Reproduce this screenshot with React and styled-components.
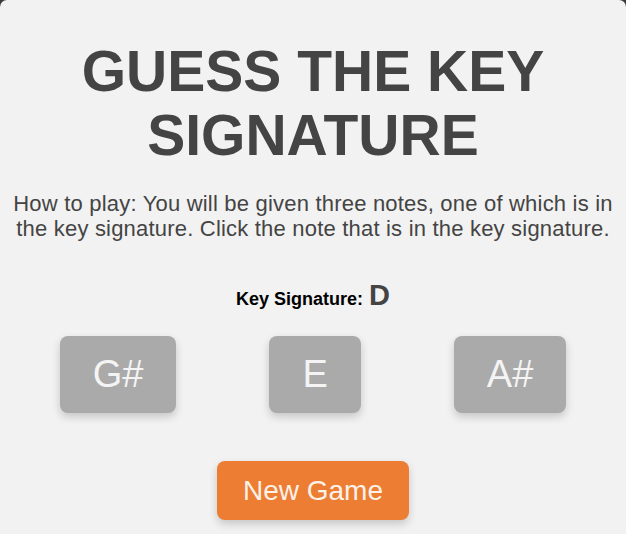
import React from "react";
import styled, { createGlobalStyle } from "styled-components";

const GlobalStyle = createGlobalStyle`
  html, body {
    margin: 0;
    padding: 0;
    background: #3a3a3a;
  }
  #root {
    width: 626px;
    height: 534px;
  }
`;

const Card = styled.div`
  width: 626px;
  height: 534px;
  box-sizing: border-box;
  background: #f2f2f2;
  border-radius: 7px 7px 0 0;
  font-family: "Liberation Sans", Arial, Helvetica, sans-serif;
  display: flex;
  flex-direction: column;
  align-items: center;
  padding: 39px 8px 0;
`;

const Title = styled.h1`
  margin: 0;
  font-size: 57px;
  line-height: 64px;
  font-weight: bold;
  color: #444444;
  text-align: center;
  width: 500px;
`;

const HowTo = styled.p`
  margin: 24px 0 0;
  font-size: 22px;
  line-height: 25px;
  letter-spacing: 0.2px;
  color: #444444;
  text-align: center;
`;

const KeyRow = styled.div`
  margin-top: 40px;
  display: flex;
  align-items: baseline;
  gap: 6px;
  line-height: 1;
`;

const KeyLabel = styled.span`
  font-size: 18px;
  font-weight: bold;
  color: #000;
`;

const KeyValue = styled.span`
  font-size: 29px;
  font-weight: bold;
  color: #444444;
`;

const Notes = styled.div`
  margin-top: 26px;
  display: flex;
  gap: 93px;
`;

const NoteButton = styled.button`
  height: 77px;
  padding: 0 33px;
  border: none;
  border-radius: 8px;
  background: #aaaaaa;
  color: #f4f4f4;
  font-family: inherit;
  font-size: 38px;
  box-shadow: 0 4px 8px rgba(0, 0, 0, 0.18);
  cursor: pointer;
`;

const NewGame = styled.button`
  margin-top: 48px;
  height: 59px;
  padding: 0 26px;
  border: none;
  border-radius: 8px;
  background: #ec7d33;
  color: #fdf1e8;
  font-family: inherit;
  font-size: 28px;
  box-shadow: 0 4px 8px rgba(0, 0, 0, 0.18);
  cursor: pointer;
`;

const notes = ["G#", "E", "A#"];

export default function App() {
  return (
    <>
      <GlobalStyle />
      <Card>
        <Title>GUESS THE KEY SIGNATURE</Title>
        <HowTo>
          How to play: You will be given three notes, one of which is in the key
          signature. Click the note that is in the key signature.
        </HowTo>
        <KeyRow>
          <KeyLabel>Key Signature:</KeyLabel>
          <KeyValue>D</KeyValue>
        </KeyRow>
        <Notes>
          {notes.map((n) => (
            <NoteButton key={n}>{n}</NoteButton>
          ))}
        </Notes>
        <NewGame>New Game</NewGame>
      </Card>
    </>
  );
}
